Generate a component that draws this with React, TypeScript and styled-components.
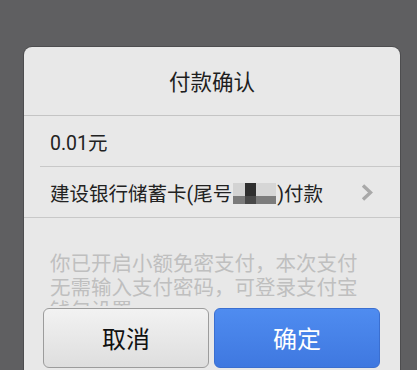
import React from "react";
import styled, { createGlobalStyle } from "styled-components";

const Global = createGlobalStyle`
  html, body { margin: 0; padding: 0; background: #5f5f61; }
  body { width: 417px; height: 370px; overflow: hidden; font-family: Roboto, "Noto Sans CJK SC", sans-serif; }
`;

const Page = styled.div`
  width: 417px;
  height: 370px;
  overflow: hidden;
  padding: 47px 17px 0 24px;
  box-sizing: border-box;
`;

const Dialog = styled.div`
  width: 376px;
  height: 340px;
  background: #e8e8e8;
  border-radius: 8px 8px 0 0;
  box-shadow: 0 0 0 1px #4d4d4f;
  display: flex;
  flex-direction: column;
  overflow: hidden;
`;

const Header = styled.div`
  height: 66px;
  display: flex;
  align-items: center;
  justify-content: center;
  font-size: 21.5px;
  color: #1e1e1e;
  border-bottom: 1px solid #c4c4c4;
  padding-bottom: 2px;
  box-sizing: content-box;
`;

const Row = styled.div<{ $inset?: boolean }>`
  height: 50px;
  display: flex;
  align-items: center;
  margin-left: ${(p) => (p.$inset ? "16px" : "0")};
  padding-left: ${(p) => (p.$inset ? "10px" : "26px")};
  padding-right: 27px;
  border-bottom: 1px solid #c8c8c8;
  font-size: 19.5px;
  color: #222;
`;

const RowText = styled.span`
  flex: 1;
  display: flex;
  align-items: center;
  white-space: nowrap;
`;

const Masked = styled.span`
  display: inline-grid;
  grid-template-columns: 12px 11px 20px;
  grid-template-rows: 13px 8px;
  width: 43px;
  height: 21px;
  margin: 0 1px 0 1px;
  transform: translateY(1px);
`;

const Cell = styled.span<{ $c: string }>`
  background: ${(p) => p.$c};
`;

const Desc = styled.div`
  height: 88px;
  overflow: hidden;
  padding: 35px 36px 0 26px;
  box-sizing: border-box;
  font-size: 20.5px;
  line-height: 23.5px;
  color: #bfbfbf;
`;

const Buttons = styled.div`
  display: grid;
  grid-template-columns: 166px 166px;
  gap: 5px;
  padding: 2px 0 0 19px;
`;

const Btn = styled.button<{ $primary?: boolean }>`
  height: 60px;
  border-radius: 6px;
  font-family: Roboto, "Noto Sans CJK SC", sans-serif;
  font-size: 24px;
  padding: 0 0 2px;
  border: 1px solid ${(p) => (p.$primary ? "#3b6fd0" : "#9c9c9c")};
  color: ${(p) => (p.$primary ? "#ffffff" : "#111")};
  background: ${(p) =>
    p.$primary
      ? "linear-gradient(#4f8cf0, #3f78e0)"
      : "linear-gradient(#f2f2f2, #dedede)"};
`;

const Chevron = () => (
  <svg width="12" height="17" viewBox="0 0 12 17">
    <polyline points="2,1.5 9.5,8.5 2,15.5" fill="none" stroke="#a9a9a9" strokeWidth="3.4" />
  </svg>
);

export default function App() {
  return (
    <>
      <Global />
      <Page>
        <Dialog>
          <Header>付款确认</Header>
          <Row $inset>
            <RowText>0.01元</RowText>
          </Row>
          <Row>
            <RowText>
              建设银行储蓄卡(尾号
              <Masked>
                <Cell $c="#d3d3d3" />
                <Cell $c="#2f2f2f" />
                <Cell $c="#d6d6d6" />
                <Cell $c="#7a7a7a" />
                <Cell $c="#484848" />
                <Cell $c="#7c7c7c" />
              </Masked>
              )付款
            </RowText>
            <Chevron />
          </Row>
          <Desc>
            你已开启小额免密支付，本次支付无需输入支付密码，可登录支付宝钱包设置
          </Desc>
          <Buttons>
            <Btn>取消</Btn>
            <Btn $primary>确定</Btn>
          </Buttons>
        </Dialog>
      </Page>
    </>
  );
}
